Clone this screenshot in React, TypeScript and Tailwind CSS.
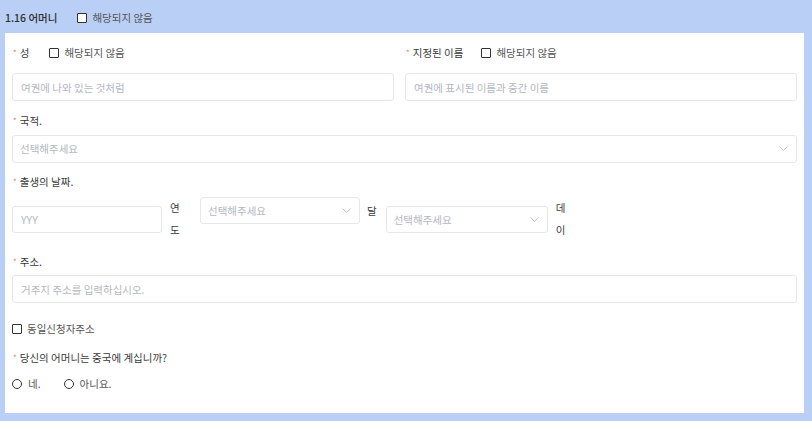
const font = { fontFamily: '"Noto Sans CJK KR", "Noto Sans", sans-serif' };

function Box() {
  return <span className="inline-block w-[10px] h-[10px] border border-[#333] rounded-[1px] bg-white shrink-0" />;
}

function Req() {
  return <span className="text-[#f56c6c] text-[8px] mr-[3px] leading-none">*</span>;
}

function Check({ label }: { label: string }) {
  return (
    <span className="flex items-center gap-[5px]">
      <Box />
      <span className="text-[#555]">{label}</span>
    </span>
  );
}

function Input({ placeholder, cls }: { placeholder: string; cls: string }) {
  return (
    <input
      readOnly
      placeholder={placeholder}
      className={"block border border-[#e4e7ed] rounded-[3px] bg-white px-[8px] text-[10.5px] outline-none placeholder:text-[#b4b7bd] " + cls}
    />
  );
}

function Select({ cls }: { cls: string }) {
  return (
    <div className={"flex items-center justify-between border border-[#e4e7ed] rounded-[3px] bg-white pl-[7px] pr-[8px] " + cls}>
      <span className="text-[#b4b7bd]">선택해주세요</span>
      <svg width="9" height="6" viewBox="0 0 9 6" fill="none">
        <polyline points="0.5,0.5 4.5,4.5 8.5,0.5" stroke="#c0c4cc" strokeWidth="1" />
      </svg>
    </div>
  );
}

function Radio({ label }: { label: string }) {
  return (
    <span className="flex items-center gap-[6px]">
      <span className="inline-block w-[10px] h-[10px] border border-[#333] rounded-full" />
      <span className="text-[#555]">{label}</span>
    </span>
  );
}

export default function App() {
  return (
    <div style={font} className="w-[812px] h-[421px] bg-[#b9cff5] pl-[5px] pr-[8px] pb-[8px] text-[10.5px] text-[#3a3a3a]">
      <div className="h-[33px] flex items-center pt-[3px]">
        <span className="font-medium text-[#303133] mr-[20px]">1.16 어머니</span>
        <Check label="해당되지 않음" />
      </div>

      <div className="bg-white h-[380px] px-[7px] pt-[10px]">
        <div className="flex">
          <div className="w-[382px]">
            <div className="h-[20px] flex items-center pl-[1px]">
              <Req />
              <span className="mr-[20px]">성</span>
              <Check label="해당되지 않음" />
            </div>
            <Input placeholder="여권에 나와 있는 것처럼" cls="w-full h-[28px] mt-[10px]" />
          </div>
          <div className="flex-1 ml-[11px]">
            <div className="h-[20px] flex items-center pl-[1px]">
              <Req />
              <span className="mr-[18px]">지정된 이름</span>
              <Check label="해당되지 않음" />
            </div>
            <Input placeholder="여권에 표시된 이름과 중간 이름" cls="w-full h-[28px] mt-[10px]" />
          </div>
        </div>

        <div className="h-[20px] flex items-center pl-[1px] mt-[10px]">
          <Req />
          <span>국적.</span>
        </div>
        <Select cls="w-full h-[28px] mt-[4px]" />

        <div className="h-[20px] flex items-center pl-[1px] mt-[9px]">
          <Req />
          <span>출생의 날짜.</span>
        </div>
        <div className="flex items-start mt-[5px]">
          <Input placeholder="YYY" cls="w-[150px] h-[27px] mt-[9px]" />
          <span className="w-[11px] ml-[8px] leading-[22px] break-all">연도</span>
          <Select cls="w-[160px] h-[27px] ml-[19px]" />
          <span className="ml-[7px] mt-[3px] leading-[22px]">달</span>
          <Select cls="w-[162px] h-[27px] ml-[9px] mt-[9px]" />
          <span className="w-[11px] ml-[8px] leading-[22px] break-all">데이</span>
        </div>

        <div className="h-[20px] flex items-center pl-[1px] mt-[11px]">
          <Req />
          <span>주소.</span>
        </div>
        <Input placeholder="거주지 주소를 입력하십시오." cls="w-full h-[28px] mt-[3px]" />

        <div className="h-[20px] flex items-center mt-[16px]">
          <Check label="동일신청자주소" />
        </div>

        <div className="h-[20px] flex items-center pl-[1px] mt-[9px]">
          <Req />
          <span>당신의 어머니는 중국에 계십니까?</span>
        </div>

        <div className="h-[20px] flex items-center gap-[23px] mt-[6px]">
          <Radio label="네." />
          <Radio label="아니요." />
        </div>
      </div>
    </div>
  );
}
